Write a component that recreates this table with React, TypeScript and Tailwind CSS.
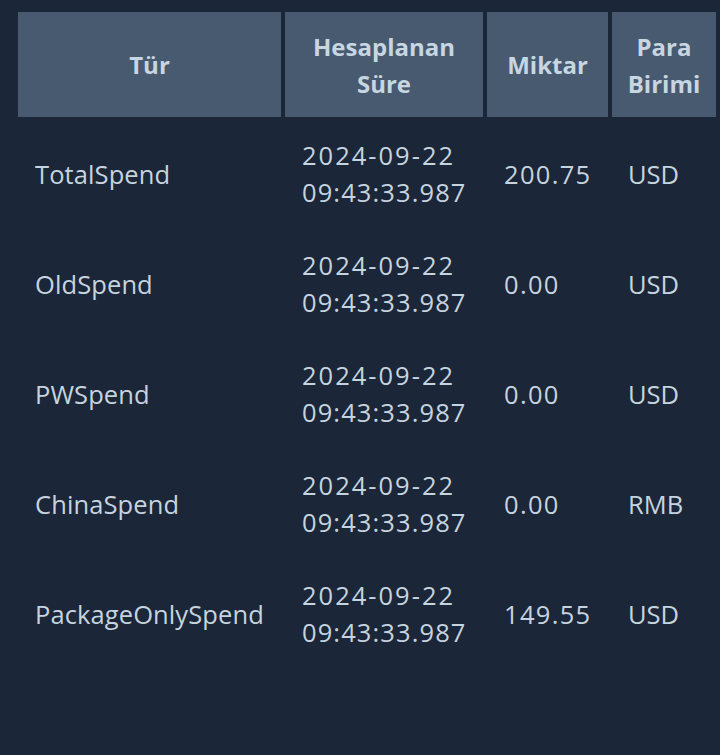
import React from 'react';

interface SpendRow {
  type: string;
  date: string;
  time: string;
  amount: string;
  currency: string;
}

const rows: SpendRow[] = [
  { type: 'TotalSpend', date: '2024-09-22', time: '09:43:33.987', amount: '200.75', currency: 'USD' },
  { type: 'OldSpend', date: '2024-09-22', time: '09:43:33.987', amount: '0.00', currency: 'USD' },
  { type: 'PWSpend', date: '2024-09-22', time: '09:43:33.987', amount: '0.00', currency: 'USD' },
  { type: 'ChinaSpend', date: '2024-09-22', time: '09:43:33.987', amount: '0.00', currency: 'RMB' },
  { type: 'PackageOnlySpend', date: '2024-09-22', time: '09:43:33.987', amount: '149.55', currency: 'USD' },
];

const headers = ['Tür', 'Hesaplanan Süre', 'Miktar', 'Para Birimi'];
const widths = ['w-[263px]', 'w-[198px]', 'w-[121px]', 'w-[104px]'];

export default function App() {
  return (
    <div
      className="min-h-[755px] w-[720px] bg-[#1b2638] pl-[14px] pt-[8px] text-[#c6d4df]"
      style={{ fontFamily: '"Open Sans", "Noto Sans", sans-serif' }}
    >
      <table className="w-[706px] table-fixed border-separate border-spacing-[4px] text-[25.5px] leading-[37px]">
        <thead>
          <tr>
            {headers.map((h, i) => (
              <th
                key={h}
                className={`${widths[i]} h-[105px] bg-[#475a70] px-[8px] text-center align-middle text-[24px] font-bold text-[#c8d6e2]`}
              >
                {h}
              </th>
            ))}
          </tr>
        </thead>
        <tbody>
          {rows.map((r) => (
            <tr key={r.type}>
              <td className="h-[106px] whitespace-nowrap px-[17px] align-middle tracking-[0.1px]">{r.type}</td>
              <td className="whitespace-nowrap px-[17px] align-middle">
                <div className="tracking-[2px]">{r.date}</div>
                <div className="tracking-[1.1px]">{r.time}</div>
              </td>
              <td className="whitespace-nowrap px-[17px] align-middle tracking-[1.3px]">{r.amount}</td>
              <td className="whitespace-nowrap px-[16px] align-middle">{r.currency}</td>
            </tr>
          ))}
        </tbody>
      </table>
    </div>
  );
}
